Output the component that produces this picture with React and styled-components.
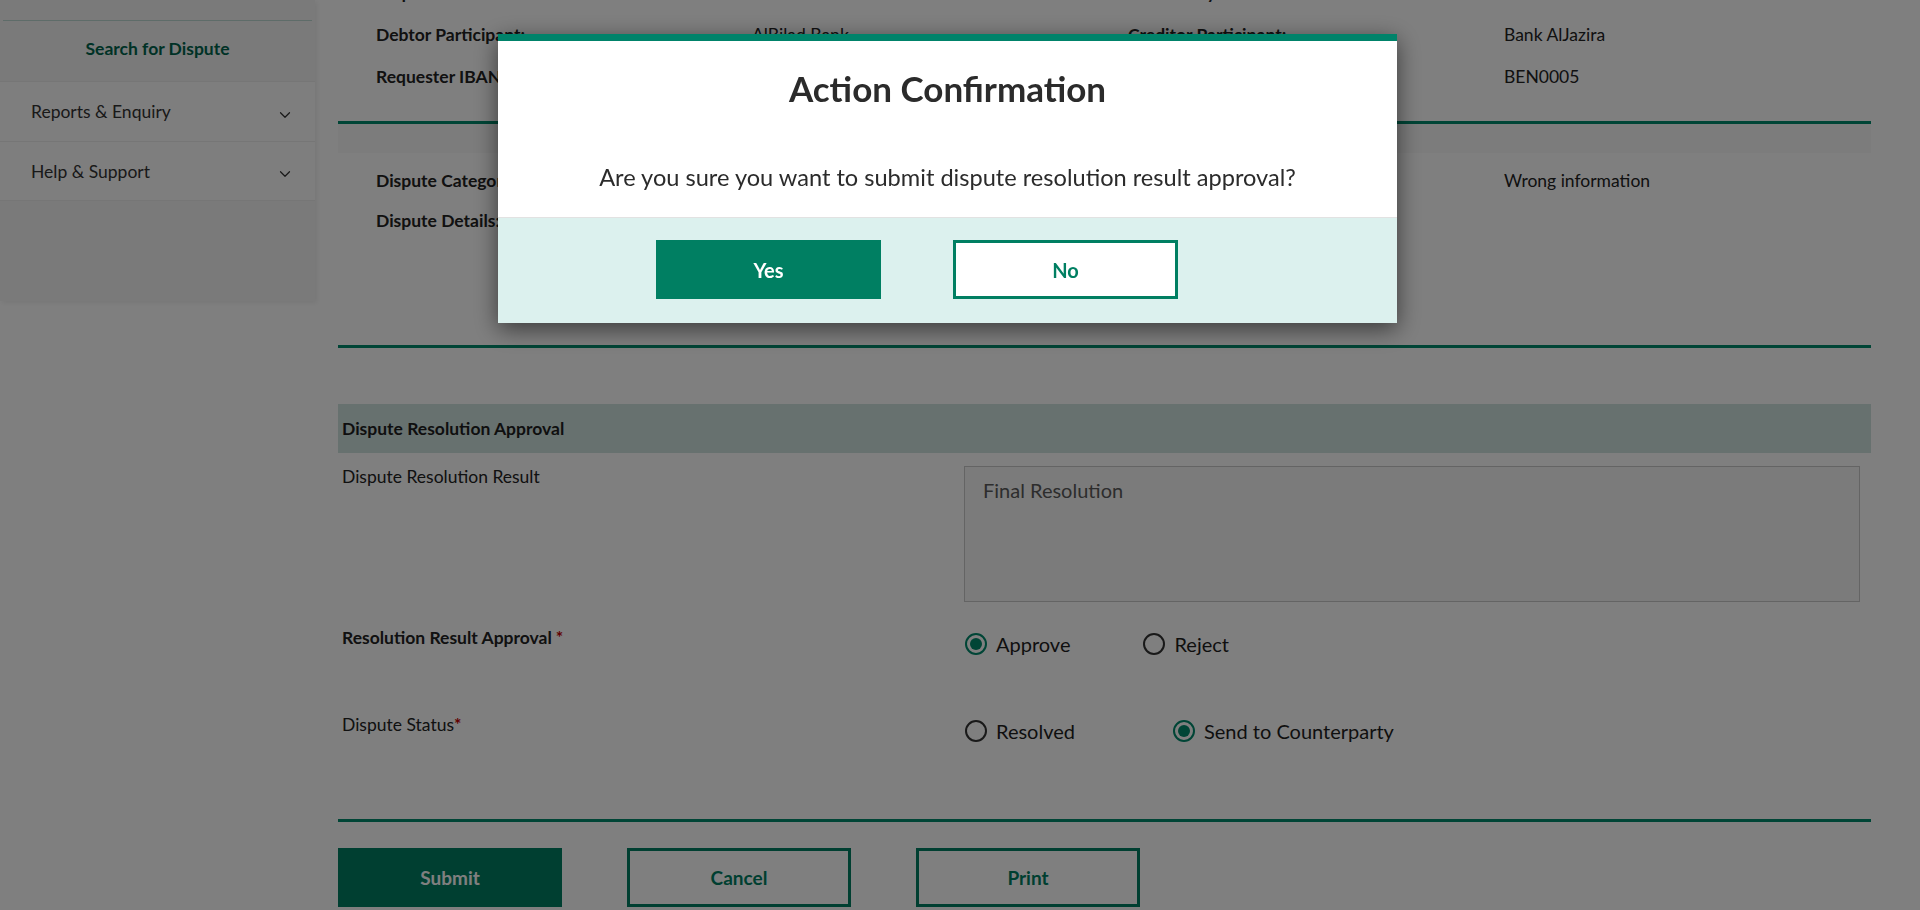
import React from 'react';
import styled, { createGlobalStyle } from 'styled-components';
import { ChevronDown } from 'lucide-react';

const GlobalStyle = createGlobalStyle`
  html, body {
    margin: 0;
    padding: 0;
    background: #ffffff;
    font-family: Lato, "Open Sans", sans-serif;
    color: #222;
    overflow: hidden;
  }
  * { box-sizing: border-box; }
`;

const GREEN = '#007f62';
const LINE = '#008a6c';

// page layout
const Page = styled.div`
  display: flex;
  width: 1920px;
  height: 910px;
  overflow: hidden;
`;

const Sidebar = styled.aside`
  flex: 0 0 315px;
  height: 301px;
  background: #f4f4f4;
  box-shadow: 2px 2px 5px rgba(0, 0, 0, 0.07);
  display: flex;
  flex-direction: column;
`;

const SideTop = styled.div`
  height: 21px;
  margin: 0 3px;
  border-bottom: 1px solid #bcd9d3;
`;

const SideActive = styled.div`
  height: 60px;
  padding-bottom: 6px;
  display: flex;
  align-items: center;
  justify-content: center;
  color: #00654d;
  font-weight: 700;
  font-size: 17.5px;
`;

const SideItem = styled.div`
  height: 60px;
  padding: 0 21px 0 31px;
  display: flex;
  align-items: center;
  justify-content: space-between;
  background: #fcfcfc;
  border-top: 1px solid #ececec;
  font-size: 17.5px;
  color: #333;
  &:last-child {
    border-bottom: 1px solid #ececec;
  }
  svg {
    margin-top: 6px;
  }
`;

const Main = styled.main`
  flex: 1;
  min-width: 0;
  padding: 0 49px 0 23px;
  margin-top: -29px;
`;

// info cards at the top
const InfoGrid = styled.div`
  display: grid;
  grid-template-columns: 376px 376px 376px 1fr;
  grid-auto-rows: ${p => p.$row}px;
  align-content: start;
  padding: ${p => p.$pad || '0'};
  padding-left: 38px;
  background: #fff;
  height: ${p => p.$height}px;
`;

const Cell = styled.div`
  display: flex;
  align-items: center;
  font-size: 17.5px;
  font-weight: ${p => (p.$label ? 700 : 400)};
  color: #222;
  white-space: nowrap;
`;

const GreenLine = styled.div`
  height: 3px;
  background: ${LINE};
`;

const Gap = styled.div`
  height: ${p => p.$h}px;
  background: ${p => p.$bg || '#fff'};
`;

// form section
const SectionHead = styled.div`
  height: 49px;
  background: #cee2de;
  display: flex;
  align-items: center;
  padding-left: 4px;
  font-weight: 700;
  font-size: 17.5px;
  color: #1e1e1e;
`;

const FormRow = styled.div`
  display: grid;
  grid-template-columns: 626px 1fr;
  padding-top: ${p => p.$top}px;
`;

const FieldLabel = styled.div`
  padding-left: 4px;
  font-size: 17.5px;
  line-height: 22px;
  font-weight: ${p => (p.$bold ? 700 : 400)};
  color: #222;
`;

const Req = styled.span`
  color: #c40000;
  font-weight: 700;
  margin-left: ${p => (p.$space ? 4 : 0)}px;
`;

const TextBox = styled.div`
  height: 136px;
  margin-right: 11px;
  background: #f6f6f6;
  border: 1px solid #c8c8c8;
  padding: 11px 18px;
  font-size: 20px;
  line-height: 24px;
  color: #5a5a5a;
`;

const RadioGroup = styled.div`
  display: flex;
  align-items: center;
  gap: ${p => p.$gap}px;
  margin-top: 5px;
  padding-left: 1px;
`;

const RadioOption = styled.label`
  display: flex;
  align-items: center;
  gap: 9px;
  font-size: 20px;
  line-height: 24px;
  color: #1e1e1e;
`;

const RadioDot = styled.span`
  width: 22px;
  height: 22px;
  border-radius: 50%;
  border: 2px solid ${p => (p.$on ? LINE : '#333')};
  display: flex;
  align-items: center;
  justify-content: center;
  &::after {
    content: '';
    width: 12px;
    height: 12px;
    border-radius: 50%;
    background: ${p => (p.$on ? LINE : 'transparent')};
  }
`;

const ButtonRow = styled.div`
  display: flex;
  gap: 65px;
  padding-top: 26px;
`;

const Button = styled.button`
  width: 224px;
  height: 59px;
  font-family: inherit;
  font-size: 19px;
  font-weight: 700;
  border: 3px solid ${GREEN};
  background: ${p => (p.$primary ? GREEN : '#fff')};
  color: ${p => (p.$primary ? '#fff' : GREEN)};
  cursor: pointer;
`;

// modal
const Overlay = styled.div`
  position: fixed;
  inset: 0;
  background: rgba(0, 0, 0, 0.5);
`;

const Modal = styled.div`
  position: fixed;
  top: 34px;
  left: 498px;
  width: 899px;
  background: #fff;
  border-top: 7px solid #00836a;
  box-shadow: 0 6px 22px rgba(0, 0, 0, 0.55);
`;

const ModalBody = styled.div`
  padding: 26px 0 26px;
  text-align: center;
  color: #2b2b2b;
`;

const ModalTitle = styled.h2`
  margin: 0 0 54px;
  font-size: 35px;
  line-height: 42px;
  font-weight: 700;
`;

const ModalText = styled.p`
  margin: 0;
  font-size: 23.6px;
  line-height: 28px;
`;

const ModalFoot = styled.div`
  display: flex;
  gap: 72px;
  padding: 22px 0 24px 158px;
  background: #dcf1ee;
  border-top: 1px solid #e2e2e2;
`;

const ModalButton = styled(Button)`
  width: 225px;
  height: 59px;
  font-size: 20px;
`;

const topRows = [
  ['Requester Account:', '', 'Beneficiary Account:', ''],
  ['Debtor Participant:', 'AlBilad Bank', 'Creditor Participant:', 'Bank AlJazira'],
  ['Requester IBAN:', 'SA0315000000000000000005', 'Beneficiary IBAN:', 'BEN0005'],
];

const detailRows = [
  ['Dispute Category:', 'Wrong Account', 'Dispute Reason:', 'Wrong information'],
  ['Dispute Details:', '', '', ''],
];

function Info({ rows, row, height, pad }) {
  return (
    <InfoGrid $row={row} $height={height} $pad={pad}>
      {rows.map((r, i) =>
        r.map((t, j) => (
          <Cell key={`${i}-${j}`} $label={j % 2 === 0}>
            {t}
          </Cell>
        ))
      )}
    </InfoGrid>
  );
}

function Radio({ on, children }) {
  return (
    <RadioOption>
      <RadioDot $on={on} />
      {children}
    </RadioOption>
  );
}

export default function App() {
  return (
    <>
      <GlobalStyle />
      <Page>
        <Sidebar>
          <SideTop />
          <SideActive>Search for Dispute</SideActive>
          <SideItem>
            Reports &amp; Enquiry <ChevronDown size={18} strokeWidth={1.6} color="#333" />
          </SideItem>
          <SideItem>
            Help &amp; Support <ChevronDown size={18} strokeWidth={1.6} color="#333" />
          </SideItem>
        </Sidebar>

        <Main>
          <Info rows={topRows} row={42} height={150} />
          <GreenLine />
          <Gap $h={29} $bg="#f9f9f9" />
          <Info rows={detailRows} row={40} height={192} pad="7px 0 0" />
          <GreenLine />
          <Gap $h={56} />

          <SectionHead>Dispute Resolution Approval</SectionHead>
          <FormRow $top={13}>
            <FieldLabel>Dispute Resolution Result</FieldLabel>
            <TextBox>Final Resolution</TextBox>
          </FormRow>
          <FormRow $top={25}>
            <FieldLabel $bold>
              Resolution Result Approval<Req $space>*</Req>
            </FieldLabel>
            <RadioGroup $gap={73}>
              <Radio on>Approve</Radio>
              <Radio>Reject</Radio>
            </RadioGroup>
          </FormRow>
          <FormRow $top={58}>
            <FieldLabel>
              Dispute Status<Req>*</Req>
            </FieldLabel>
            <RadioGroup $gap={98}>
              <Radio>Resolved</Radio>
              <Radio on>Send to Counterparty</Radio>
            </RadioGroup>
          </FormRow>
          <Gap $h={76} />
          <GreenLine />
          <ButtonRow>
            <Button $primary>Submit</Button>
            <Button>Cancel</Button>
            <Button>Print</Button>
          </ButtonRow>
        </Main>
      </Page>

      <Overlay />
      <Modal>
        <ModalBody>
          <ModalTitle>Action Confirmation</ModalTitle>
          <ModalText>Are you sure you want to submit dispute resolution result approval?</ModalText>
        </ModalBody>
        <ModalFoot>
          <ModalButton $primary>Yes</ModalButton>
          <ModalButton>No</ModalButton>
        </ModalFoot>
      </Modal>
    </>
  );
}
